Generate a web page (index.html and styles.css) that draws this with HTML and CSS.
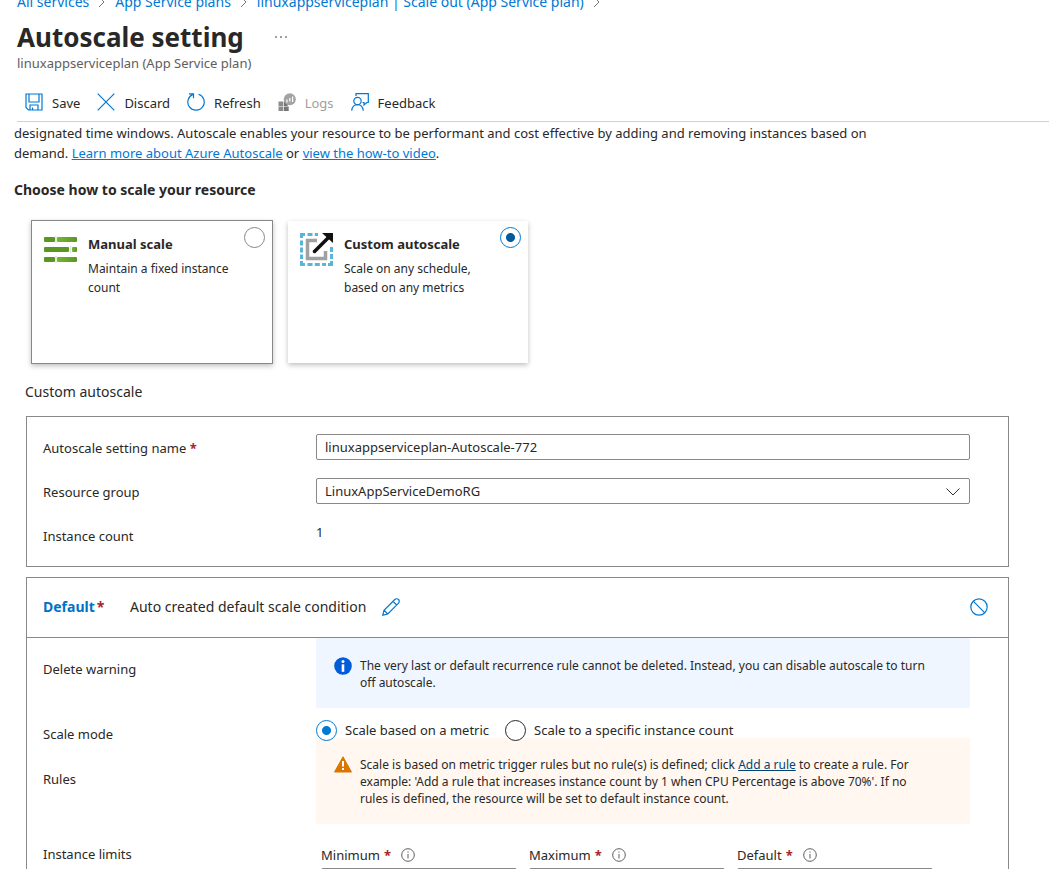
FILE: index.html
```html
<!DOCTYPE html>
<html lang="en">
<head>
    <meta charset="UTF-8">
    <title>Autoscale setting</title>
    <link rel="stylesheet" href="styles.css">
</head>
<body>
<header class="blade-header">
    <nav class="breadcrumb">
        <a href="#">All services</a>
        <svg class="crumb-arrow" viewBox="0 0 8 12"><path d="M1 1l5 5-5 5"/></svg>
        <a href="#">App Service plans</a>
        <svg class="crumb-arrow" viewBox="0 0 8 12"><path d="M1 1l5 5-5 5"/></svg>
        <a href="#">linuxappserviceplan | Scale out (App Service plan)</a>
        <svg class="crumb-arrow" viewBox="0 0 8 12"><path d="M1 1l5 5-5 5"/></svg>
    </nav>
    <div class="title-row">
        <h1>Autoscale setting</h1>
        <button class="more" type="button" aria-label="More">
            <svg viewBox="0 0 14 4"><circle cx="2" cy="2" r="0.8"/><circle cx="7" cy="2" r="0.8"/><circle cx="12" cy="2" r="0.8"/></svg>
        </button>
    </div>
    <p class="subtitle">linuxappserviceplan (App Service plan)</p>
    <div class="toolbar">
        <button type="button">
            <svg class="tool-icon" viewBox="0 0 18 18"><path d="M1 1h16v16H3.500L1 14.500zM4 1v8h10V1M5 17v-5h8v5M7.500 17v-2.500"/></svg>
            Save
        </button>
        <button type="button">
            <svg class="tool-icon" viewBox="0 0 18 18"><path d="M.7.7l16.600 16.600M17.300.7L.7 17.300"/></svg>
            Discard
        </button>
        <button type="button">
            <svg class="tool-icon" viewBox="0 0 18 18"><path d="M11.500 1.200A8.200 8.200 0 1 1 6 1.400M2 .8h4.500v4.500"/></svg>
            Refresh
        </button>
        <button type="button" disabled>
            <svg class="tool-icon logs-icon" viewBox="0 0 18 18"><path d="M.5 8.500H5V13H.5zM.5 13.500H5V18H.5z" fill="#8c8c8c"/><path d="M5.700 13.500h5V18h-5zM5.700 8.500h4V13h-4z" fill="#777"/><circle cx="11.800" cy="6.200" r="6" fill="#a3a3a3"/><path d="M9 9.500V6.500M11.800 8.500V5M14.600 9V3.500" stroke="#fff" stroke-width="1.200"/></svg>
            Logs
        </button>
        <button type="button">
            <svg class="tool-icon" viewBox="0 0 18 18"><path d="M5 3V.7h12.300v8.800h-1.500L13 12V9.500h-1.500"/><circle cx="6.500" cy="8" r="3.700"/><path d="M.7 17.700c.4-3.600 2.800-6 5.800-6s5.400 2.400 5.800 6"/></svg>
            Feedback
        </button>
    </div>
</header>
<main class="blade-content">
    <p class="intro">designated time windows. Autoscale enables your resource to be performant and cost effective by adding and removing instances based on demand. <a href="#">Learn more about Azure Autoscale</a> or <a href="#">view the how-to video</a>.</p>
    <h2>Choose how to scale your resource</h2>
    <div class="cards">
        <label class="card card-bordered">
            <svg class="card-icon" viewBox="0 0 33 33">
                <defs><linearGradient id="green"><stop offset="0" stop-color="#73b82e"/><stop offset="1" stop-color="#5a9622"/></linearGradient></defs>
                <g fill="#5a9622"><rect y="4" width="11" height="5" rx="1"/><rect y="14" width="25" height="5" rx="1"/><rect y="24" width="11" height="5" rx="1"/></g>
                <g fill="url(#green)"><rect x="13" y="4" width="20" height="5" rx="1"/><rect x="28" y="14" width="5" height="5" rx="1"/><rect x="13" y="24" width="20" height="5" rx="1"/></g>
                <path d="M12 3v7M26.500 13v7M12 23v7" stroke="#e0e0e0" stroke-width="1.500"/>
            </svg>
            <span class="card-text"><b>Manual scale</b><span>Maintain a fixed instance count</span></span>
            <input class="radio" type="radio" name="scale-type">
        </label>
        <label class="card">
            <svg class="card-icon" viewBox="0 0 33 33">
                <g fill="none" stroke="#59b4d9" stroke-width="3">
                    <path d="M1.500 5V1.500H5M28 31.500h3.500V28M1.500 28v3.500H5"/>
                    <path d="M7.500 1.500H18M7.500 31.500H26" stroke-dasharray="5 2.300"/>
                    <path d="M1.500 7.500V26M31.500 14V26" stroke-dasharray="5 2"/>
                </g>
                <path d="M17 7.500H7.500v18h18V18" fill="none" stroke="#a0a1a2" stroke-width="3.500"/>
                <path d="M14.500 18.500L29 4" stroke="#111" stroke-width="3.500" stroke-linecap="round"/>
                <path d="M22 0h11v10z" fill="#111"/>
            </svg>
            <span class="card-text"><b>Custom autoscale</b><span>Scale on any schedule, based on any metrics</span></span>
            <input class="radio radio-dark" type="radio" name="scale-type" checked>
        </label>
    </div>
    <h3>Custom autoscale</h3>
    <form>
        <section class="panel settings">
            <div class="row">
                <label class="row-label" for="setting-name">Autoscale setting name <span class="required">*</span></label>
                <input class="field" id="setting-name" type="text" value="linuxappserviceplan-Autoscale-772" required>
            </div>
            <div class="row">
                <label class="row-label" for="resource-group">Resource group</label>
                <div class="select-wrap">
                    <select class="field" id="resource-group"><option>LinuxAppServiceDemoRG</option></select>
                    <svg class="select-arrow" viewBox="0 0 14 8"><path d="M.5.5L7 7 13.500.5"/></svg>
                </div>
            </div>
            <div class="row">
                <span class="row-label">Instance count</span>
                <span class="row-value">1</span>
            </div>
        </section>
        <section class="panel">
            <div class="panel-header">
                <b class="condition">Default<span class="required">*</span></b>
                <span>Auto created default scale condition</span>
                <button class="icon-button" type="button" aria-label="Edit name">
                    <svg viewBox="0 0 18 18"><path d="M.8 17.200l1.200-5L12.800 1.500a2.300 2.300 0 0 1 3.700 3.700L5.800 16zM2 12.200L5.800 16M11 3.300L14.700 7"/></svg>
                </button>
                <button class="icon-button push" type="button" aria-label="Disable condition">
                    <svg viewBox="0 0 18 18"><circle cx="9" cy="9" r="8.200"/><path d="M3.200 3.200l11.600 11.600"/></svg>
                </button>
            </div>
            <div class="row">
                <span class="row-label label-notice">Delete warning</span>
                <div class="notice info">
                    <svg class="notice-icon" viewBox="0 0 18 18"><circle cx="9" cy="9" r="8.800" fill="#015cda"/><circle cx="9" cy="4.600" r="1.500" fill="#fff"/><path d="M9 7.300v7.500" stroke="#fff" stroke-width="2.600"/></svg>
                    <p>The very last or default recurrence rule cannot be deleted. Instead, you can disable autoscale to turn off autoscale.</p>
                </div>
            </div>
            <div class="row mode-row">
                <span class="row-label label-mode">Scale mode</span>
                <div class="modes">
                    <label><input class="radio" type="radio" name="mode" checked>Scale based on a metric</label>
                    <label><input class="radio radio-black" type="radio" name="mode">Scale to a specific instance count</label>
                </div>
            </div>
            <div class="row">
                <span class="row-label label-rules">Rules</span>
                <div class="notice warning">
                    <svg class="notice-icon" viewBox="0 0 18 18"><path d="M9 .8L17.500 16H.5z" fill="#db7500" stroke="#db7500" stroke-linejoin="round"/><path d="M9 5v5.500M9 12v2" stroke="#fff" stroke-width="2"/></svg>
                    <p>Scale is based on metric trigger rules but no rule(s) is defined; click <a href="#">Add a rule</a> to create a rule. For example: 'Add a rule that increases instance count by 1 when CPU Percentage is above 70%'. If no rules is defined, the resource will be set to default instance count.</p>
                </div>
            </div>
            <div class="row">
                <span class="row-label label-limits">Instance limits</span>
                <div class="limits">
                    <div class="limit">
                        <label for="min">Minimum <span class="required">*</span><svg viewBox="0 0 14 14"><circle cx="7" cy="7" r="6.300"/><path d="M7 6v4.500M7 3.500v1.200"/></svg></label>
                        <input class="field" id="min" type="text">
                    </div>
                    <div class="limit">
                        <label for="max">Maximum <span class="required">*</span><svg viewBox="0 0 14 14"><circle cx="7" cy="7" r="6.300"/><path d="M7 6v4.500M7 3.500v1.200"/></svg></label>
                        <input class="field" id="max" type="text">
                    </div>
                    <div class="limit">
                        <label for="def">Default <span class="required">*</span><svg viewBox="0 0 14 14"><circle cx="7" cy="7" r="6.300"/><path d="M7 6v4.500M7 3.500v1.200"/></svg></label>
                        <input class="field" id="def" type="text">
                    </div>
                </div>
            </div>
        </section>
    </form>
</main>
</body>
</html>
```
FILE: styles.css
```css
* {
    box-sizing: border-box;
}
body {
    margin: 0;
    height: 100vh;
    display: flex;
    flex-direction: column;
    overflow: hidden;
    background: #fff;
    color: #292827;
    font: 13px/20px "Noto Sans", sans-serif;
}
h1, h2, h3, p {
    margin: 0;
}
a {
    color: #0078d4;
}
button, input, select {
    font: inherit;
    color: inherit;
}
button {
    border: 0;
    padding: 0;
    background: none;
}
svg {
    flex: none;
    fill: none;
    stroke-width: 1;
}
.blade-header {
    flex: none;
    padding-left: 17px;
}
/* scrolled partly out of view */
.breadcrumb {
    display: flex;
    align-items: flex-end;
    height: 12px;
    gap: 9px;
    font-size: 14px;
}
.breadcrumb a {
    text-decoration: none;
}
.crumb-arrow {
    width: 8px;
    height: 12px;
    margin-bottom: 4px;
    stroke: #797775;
}
.title-row {
    display: flex;
    align-items: center;
    gap: 30px;
    height: 50px;
}
h1 {
    font-size: 26px;
    line-height: 36px;
}
.more svg {
    display: block;
    width: 14px;
    height: 4px;
    fill: #292827;
}
.subtitle {
    margin-top: -9px;
    color: #605e5c;
}
.toolbar {
    display: flex;
    gap: 17px;
    height: 49px;
    padding: 10px 0 0 8px;
    border-bottom: 1px solid #d2d0ce;
}
.toolbar button {
    display: flex;
    align-items: center;
    gap: 9px;
    height: 40px;
}
.toolbar button:disabled {
    color: #a19f9d;
}
.tool-icon {
    width: 18px;
    height: 18px;
    margin-bottom: 2px;
    stroke: #0078d4;
    stroke-width: 1.2;
}
.logs-icon {
    stroke: none;
}
.blade-content {
    flex: 1;
    min-height: 0;
    overflow: hidden;
    padding: 1px 40px 0 14px;
}
.intro {
    max-width: 890px;
}
h2 {
    margin-top: 17px;
    font-size: 14px;
    line-height: 20px;
}
.cards {
    display: flex;
    align-items: center;
    gap: 15px;
    margin: 20px 0 0 17px;
}
.card {
    display: flex;
    box-sizing: content-box;
    width: 221px;
    height: 118px;
    padding: 12px 7px 12px 12px;
    box-shadow: 0 2px 5px rgba(0, 0, 0, .25);
}
.card-bordered {
    border: 1px solid #8a8886;
}
.card-icon {
    width: 33px;
    height: 33px;
    margin-right: 11px;
}
.card-text {
    flex: 1;
    display: flex;
    flex-direction: column;
    gap: 5px;
    padding-top: 2px;
    font-size: 12px;
    line-height: 19px;
}
.card-text b {
    font-size: 13px;
}
.card .radio {
    margin-top: -6px;
}
.radio {
    appearance: none;
    flex: none;
    width: 21px;
    height: 21px;
    margin: 0;
    border: 1px solid #8a8886;
    border-radius: 50%;
    background: #fff;
}
.radio:checked {
    border-color: #0078d4;
    background: radial-gradient(circle, #0078d4 4px, #fff 5px);
}
.radio-dark:checked {
    background: radial-gradient(circle, #005a9e 4px, #fff 5px);
}
.radio-black {
    border-color: #292827;
}
h3 {
    margin: 18px 0 14px 11px;
    font-size: 14px;
    font-weight: 400;
    line-height: 20px;
}
.panel {
    margin: 0 0 10px 12px;
    border: 1px solid #8a8886;
}
.settings {
    height: 151px;
    padding-top: 17px;
}
.settings .row {
    height: 44px;
}
.row {
    display: flex;
    padding: 0 38px 0 16px;
}
.row-label {
    flex: none;
    width: 273px;
    padding-top: 4px;
}
.required {
    color: #a4262c;
    font-weight: 700;
}
.field {
    display: block;
    width: 100%;
    min-width: 0;
    height: 26px;
    padding: 0 8px;
    border: 1px solid #8a8886;
    border-radius: 2px;
    background: #fff;
}
.select-wrap {
    position: relative;
    flex: 1;
}
select.field {
    appearance: none;
}
.select-arrow {
    position: absolute;
    top: 10px;
    right: 10px;
    width: 14px;
    height: 8px;
    stroke: #323130;
    pointer-events: none;
}
.panel-header {
    display: flex;
    align-items: center;
    height: 60px;
    padding: 0 20px 2px 16px;
    border-bottom: 1px solid #8a8886;
    font-size: 14px;
}
.condition {
    width: 87px;
    color: #0072c6;
}
.condition .required {
    margin-left: 2px;
}
.icon-button {
    margin-left: 16px;
}
.icon-button svg {
    display: block;
    width: 18px;
    height: 18px;
    stroke: #0078d4;
    stroke-width: 1.2;
}
.push {
    margin-left: auto;
}
.notice {
    flex: 1;
    display: flex;
    gap: 8px;
    padding: 19px 36px 17px 18px;
    border-radius: 2px;
    font-size: 12px;
    line-height: 17px;
}
.notice-icon {
    width: 18px;
    height: 18px;
}
.info {
    background: #eff6ff;
}
.warning {
    padding-top: 18px;
    background: #fff7f0;
}
.warning a {
    color: #004578;
}
.label-notice {
    padding-top: 21px;
}
.mode-row {
    height: 30px;
}
.label-mode {
    padding-top: 16px;
}
.label-rules {
    padding-top: 31px;
}
.label-limits {
    padding-top: 20px;
}
.modes {
    display: flex;
    gap: 16px;
    padding-top: 12px;
}
/* the radios stay above the notice that follows them */
.modes .radio {
    position: relative;
    z-index: 1;
}
.modes label {
    display: flex;
    align-items: center;
    gap: 8px;
    height: 20px;
}
.limits {
    display: flex;
    gap: 12px;
    padding: 21px 0 20px 5px;
}
.limit {
    width: 196px;
}
.limit label {
    display: flex;
    align-items: center;
    gap: 4px;
    margin-bottom: 3px;
}
.limit svg {
    width: 14px;
    height: 14px;
    margin-left: 6px;
    stroke: #605e5c;
}
```
